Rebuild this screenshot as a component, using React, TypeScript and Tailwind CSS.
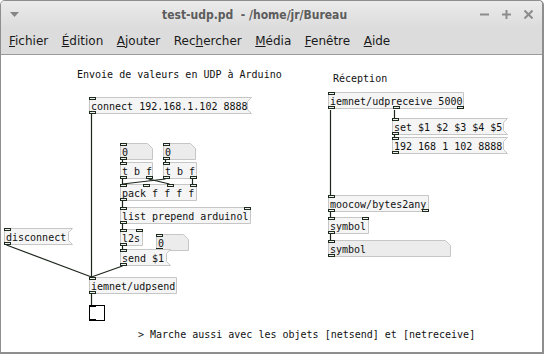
import React from "react";

const CT = 55; // canvas top in page coordinates

type Kind = "obj" | "msg" | "atom";
interface NodeDef {
  x: number;
  y: number;
  w: number;
  h?: number;
  kind: Kind;
  text: string;
  ins: number;
  outs: number;
}

const nodes: NodeDef[] = [
  { x: 88, y: 97, w: 159, kind: "msg", text: "connect 192.168.1.102 8888", ins: 1, outs: 1 },
  { x: 119, y: 143, w: 33, kind: "atom", text: "0", ins: 1, outs: 1 },
  { x: 162, y: 143, w: 33, kind: "atom", text: "0", ins: 1, outs: 1 },
  { x: 119, y: 162, w: 33, kind: "obj", text: "t b f", ins: 1, outs: 2 },
  { x: 162, y: 162, w: 34, kind: "obj", text: "t b f", ins: 1, outs: 2 },
  { x: 119, y: 184, w: 77, kind: "obj", text: "pack f f f f", ins: 4, outs: 1 },
  { x: 119, y: 207, w: 131, kind: "obj", text: "list prepend arduinol", ins: 2, outs: 1 },
  { x: 119, y: 229, w: 23, kind: "obj", text: "l2s", ins: 2, outs: 1 },
  { x: 155, y: 234, w: 33, kind: "atom", text: "0", ins: 1, outs: 1 },
  { x: 119, y: 249, w: 47, kind: "msg", text: "send $1", ins: 1, outs: 1 },
  { x: 3, y: 228, w: 65, kind: "msg", text: "disconnect", ins: 1, outs: 1 },
  { x: 88, y: 277, w: 88, kind: "obj", text: "iemnet/udpsend", ins: 1, outs: 1 },
  { x: 327, y: 92, w: 136, kind: "obj", text: "iemnet/udpreceive 5000", ins: 1, outs: 3 },
  { x: 391, y: 118, w: 112, kind: "msg", text: "set $1 $2 $3 $4 $5", ins: 1, outs: 1 },
  { x: 391, y: 137, w: 112, kind: "msg", text: "192 168 1 102 8888", ins: 1, outs: 1 },
  { x: 327, y: 195, w: 101, kind: "obj", text: "moocow/bytes2any", ins: 1, outs: 2 },
  { x: 327, y: 217, w: 41, kind: "obj", text: "symbol", ins: 2, outs: 1 },
  { x: 327, y: 240, w: 123, kind: "atom", text: "symbol", ins: 1, outs: 1 },
];

// connections in page coords [x1,y1,x2,y2]
const wires: [number, number, number, number][] = [
  [91, 114, 91, 277],
  [6, 245, 91, 277],
  [122, 266, 91, 277],
  [91, 294, 91, 305],
  [122, 160, 122, 162],
  [165, 160, 165, 162],
  [122, 179, 122, 184],
  [148, 179, 169, 184],
  [165, 179, 122, 184],
  [192, 179, 192, 184],
  [122, 201, 122, 207],
  [122, 224, 122, 229],
  [122, 246, 122, 249],
  [158, 250, 122, 250],
  [330, 110, 330, 195],
  [394, 110, 394, 118],
  [394, 135, 394, 137],
  [330, 212, 330, 217],
  [330, 234, 330, 240],
];

function portXs(n: number, w: number) {
  if (n <= 1) return [0];
  const out: number[] = [];
  for (let i = 0; i < n; i++) out.push(Math.round((i * (w - 7)) / (n - 1)));
  return out;
}

function Port({ left, top }: { left: number; top: boolean }) {
  return (
    <div
      className={`absolute h-[3px] w-[7px] border border-[#1d2a1d] bg-[#eef0ee] ${top ? "top-0" : "bottom-0"}`}
      style={{ left }}
    />
  );
}

function Box({ x, y, w, h = 17, kind, text, ins, outs }: NodeDef) {
  const pts =
    kind === "msg"
      ? `0.5,0.5 ${w + 3.5},0.5 ${w - 0.5},4.5 ${w - 0.5},${h - 4.5} ${w + 3.5},${h - 0.5} 0.5,${h - 0.5}`
      : kind === "atom"
      ? `0.5,0.5 ${w - 5.5},0.5 ${w - 0.5},5.5 ${w - 0.5},${h - 0.5} 0.5,${h - 0.5}`
      : `0.5,0.5 ${w - 0.5},0.5 ${w - 0.5},${h - 0.5} 0.5,${h - 0.5}`;
  const fill = kind === "atom" ? "#ececec" : "#f5f5f5";
  return (
    <div className="absolute" style={{ left: x, top: y - CT, width: w, height: h }}>
      <svg className="absolute left-0 top-0 overflow-visible" width={w} height={h}>
        <polygon points={pts} fill={fill} stroke="#c6c6c6" strokeWidth={1} />
      </svg>
      <div className="absolute left-[2px] top-[4px] whitespace-pre text-[10px] leading-[12px] text-[#111]">
        {text}
      </div>
      {portXs(ins, w).map((px, i) => (
        <Port key={"i" + i} left={px} top />
      ))}
      {portXs(outs, w).map((px, i) => (
        <Port key={"o" + i} left={px} top={false} />
      ))}
    </div>
  );
}

export default function App() {
  return (
    <div className="h-[354px] w-[544px] bg-white">
      <div className="flex h-[354px] w-[544px] flex-col overflow-hidden rounded-t-[5px] border-b-2 border-l border-r-2 border-t border-[#8e8e8e] bg-white">
        {/* title bar */}
        <div className="flex h-[27px] shrink-0 items-center bg-gradient-to-b from-[#ebebeb] to-[#dcdcdc]">
          <svg className="ml-[9px]" width="9" height="6" viewBox="0 0 9 6">
            <polygon points="0,0 9,0 4.5,5" fill="#858585" />
          </svg>
          <div className="ml-[143px] whitespace-pre font-['DejaVu_Sans_Condensed','DejaVu_Sans',sans-serif] text-[12px] font-bold text-[#5c5c5c] [font-stretch:condensed]">
            test-udp.pd  - /home/jr/Bureau
          </div>
          <div className="ml-auto mr-[9px] flex items-center gap-[13px]">
            <svg width="9" height="9" viewBox="0 0 9 9">
              <line x1="0" y1="4.5" x2="9" y2="4.5" stroke="#8c8c8c" strokeWidth="2" />
            </svg>
            <svg width="9" height="9" viewBox="0 0 9 9">
              <line x1="0" y1="4.5" x2="9" y2="4.5" stroke="#8c8c8c" strokeWidth="2" />
              <line x1="4.5" y1="0" x2="4.5" y2="9" stroke="#8c8c8c" strokeWidth="2" />
            </svg>
            <svg width="9" height="9" viewBox="0 0 9 9">
              <line x1="0.5" y1="0.5" x2="8.5" y2="8.5" stroke="#8c8c8c" strokeWidth="2" />
              <line x1="8.5" y1="0.5" x2="0.5" y2="8.5" stroke="#8c8c8c" strokeWidth="2" />
            </svg>
          </div>
        </div>
        {/* menu bar */}
        <div className="flex h-[27px] shrink-0 items-center gap-[13.5px] border-b border-[#9a9a9a] bg-[#dcdcdc] pl-[8px] font-['DejaVu_Sans',sans-serif] text-[12px] text-[#1a1a1a]">
          <span><u>F</u>ichier</span>
          <span><u>É</u>dition</span>
          <span><u>A</u>jouter</span>
          <span>Rec<u>h</u>ercher</span>
          <span><u>M</u>édia</span>
          <span><u>F</u>enêtre</span>
          <span><u>A</u>ide</span>
        </div>
        {/* canvas */}
        <div className="relative flex-1 bg-white font-['DejaVu_Sans_Mono',monospace]">
          <div
            className="absolute whitespace-pre text-[10px] leading-[12px] text-[#111]"
            style={{ left: 76, top: 69 - CT }}
          >
            Envoie de valeurs en UDP à Arduino
          </div>
          <div
            className="absolute whitespace-pre text-[10px] leading-[12px] text-[#111]"
            style={{ left: 332, top: 73 - CT }}
          >
            Réception
          </div>
          <div
            className="absolute whitespace-pre text-[10px] leading-[12px] text-[#111]"
            style={{ left: 137, top: 329 - CT }}
          >
            {"> Marche aussi avec les objets [netsend] et [netreceive]"}
          </div>

          <svg className="absolute left-0 top-0" width="544" height="300">
            {wires.map(([x1, y1, x2, y2], i) => (
              <line
                key={i}
                x1={x1 - 1 + 0.5}
                y1={y1 - CT}
                x2={x2 - 1 + 0.5}
                y2={y2 - CT}
                stroke="#1c261c"
                strokeWidth={1.2}
              />
            ))}
          </svg>

          {nodes.map((n, i) => (
            <Box key={i} {...n} />
          ))}

          {/* bang */}
          <div
            className="absolute h-[16px] w-[16px] border border-black bg-white"
            style={{ left: 88, top: 305 - CT }}
          >
            <div className="absolute left-[-1px] top-[-1px] h-[2px] w-[7px] bg-black" />
            <div className="absolute bottom-[-1px] left-[-1px] h-[2px] w-[7px] bg-black" />
          </div>
        </div>
      </div>
    </div>
  );
}
